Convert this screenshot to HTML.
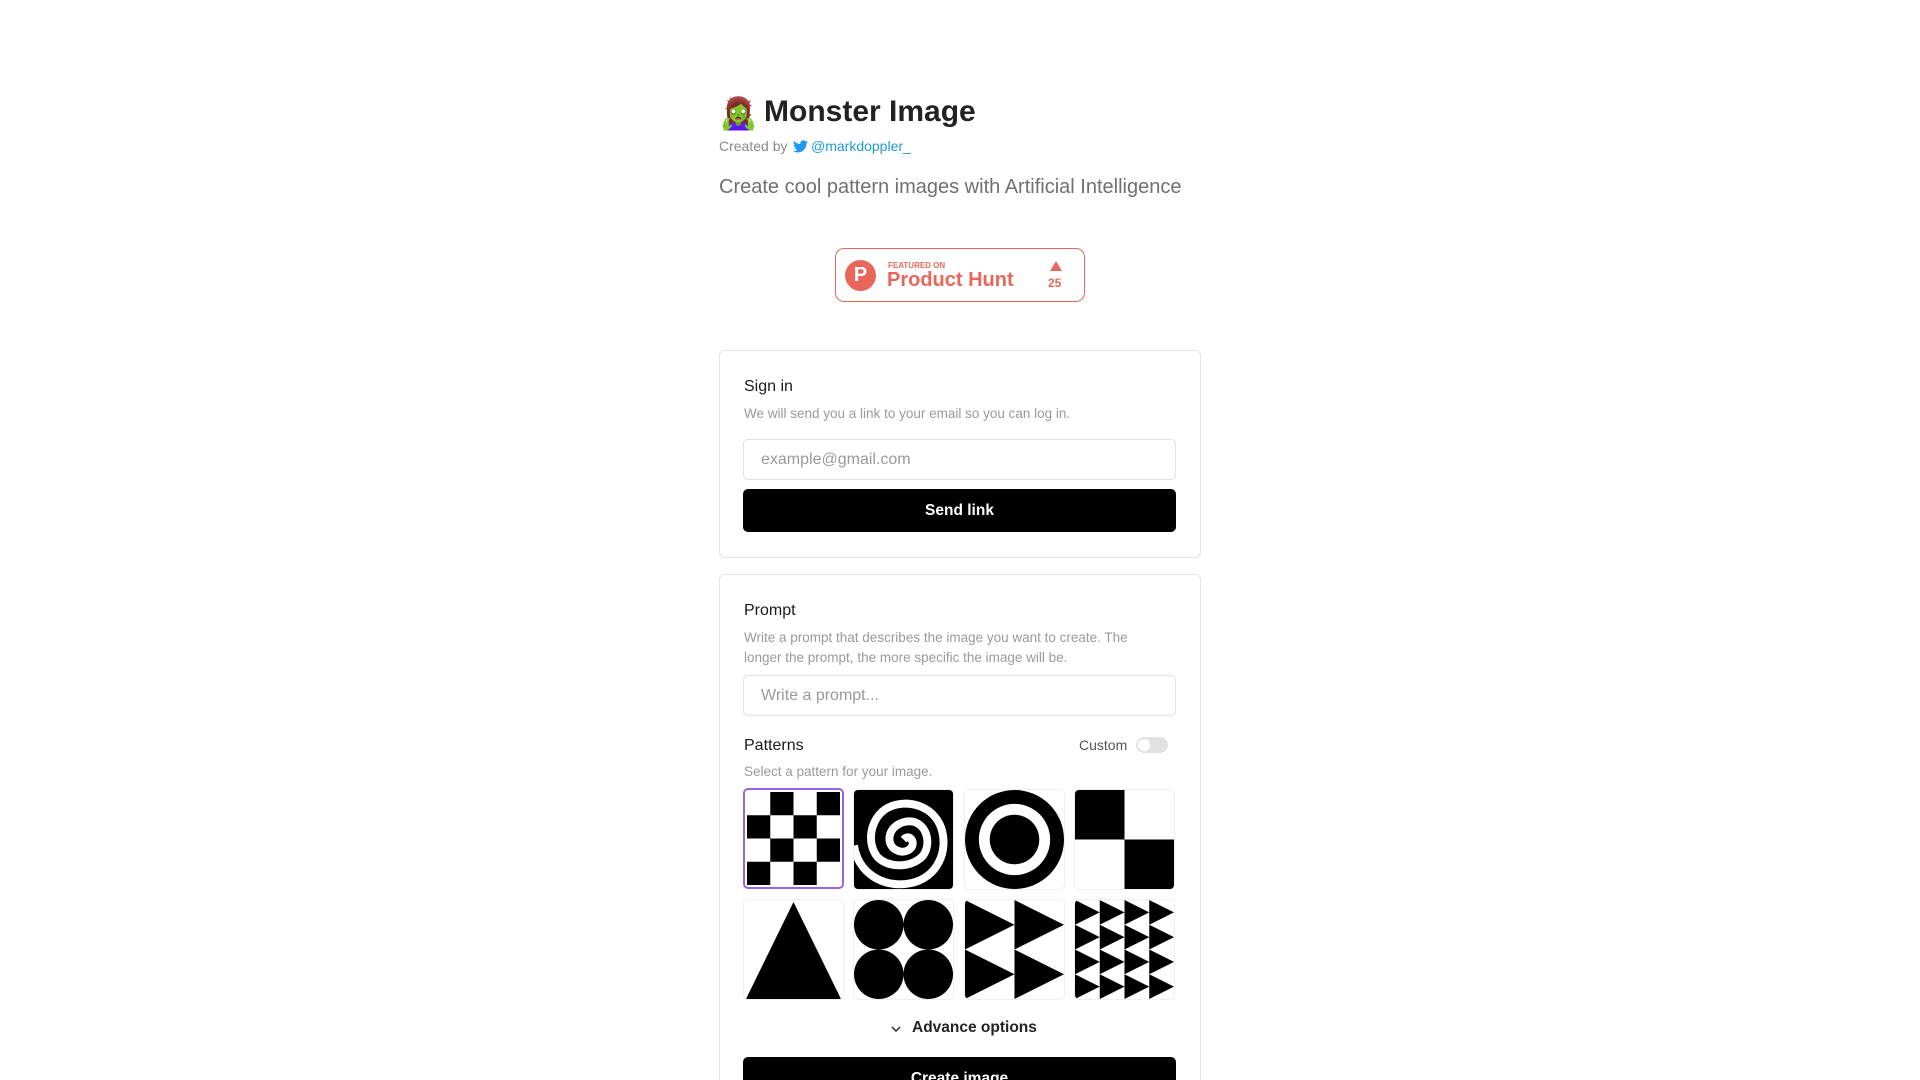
<!DOCTYPE html>
<html><head><meta charset="utf-8"><style>
*{box-sizing:border-box;margin:0;padding:0}
html{width:1920px;height:1080px;overflow:hidden}
body{width:1920px;height:1080px;overflow:hidden;background:#fff;font-family:"Liberation Sans",sans-serif;position:relative;color:#111}
.a{position:absolute;white-space:nowrap}
.card{position:absolute;left:719px;width:482px;border:1px solid #e6e6e6;border-radius:6px;background:#fff}
.inp{position:absolute;left:743px;width:433px;height:41px;border:1px solid #e2e2e2;border-radius:5px;font-size:16px;color:#9a9a9a;padding:11px 0 0 17px}
.btn{position:absolute;left:743px;width:433px;height:43px;background:#000;border-radius:5px;color:#fff;font-size:15.5px;font-weight:bold;text-align:center;line-height:43px}
.h{font-size:16px;color:#1a1a1a}
.d{font-size:13.5px;color:#9a9a9a}
.t{position:absolute;width:101px;height:101px;border:1px solid #eee;border-radius:5px;overflow:hidden}
.t svg{display:block;width:100%;height:100%}
</style></head><body>
<div class="a" style="left:719px;top:95px;font-size:31px">🧟‍♀️</div>
<div class="a" style="left:764px;top:95px;font-size:30px;font-weight:bold;color:#222">Monster Image</div>
<div class="a" style="left:719px;top:138px;font-size:14px;color:#8a8a8a">Created by</div>
<svg class="a" style="left:793px;top:140px" width="15" height="13" viewBox="0 0 24 20"><path fill="#1d9bf0" d="M24 2.4a10 10 0 0 1-2.8.8A4.9 4.9 0 0 0 23.3.5a9.8 9.8 0 0 1-3.1 1.2A4.9 4.9 0 0 0 11.8 6 14 14 0 0 1 1.7.9a4.9 4.9 0 0 0 1.5 6.6A4.9 4.9 0 0 1 1 6.9a4.9 4.9 0 0 0 3.9 4.8 4.9 4.9 0 0 1-2.2.1 4.9 4.9 0 0 0 4.6 3.4A9.9 9.9 0 0 1 0 17.3 14 14 0 0 0 7.5 19.5c9.1 0 14-7.5 14-14v-.6A10 10 0 0 0 24 2.4z"/></svg>
<div class="a" style="left:811px;top:138px;font-size:14px;color:#1f9bd1">@markdoppler_</div>
<div class="a" style="left:719px;top:176px;font-size:20px;color:#707070">Create cool pattern images with Artificial Intelligence</div>
<div class="a" style="left:835px;top:248px;width:250px;height:54px;border:1.5px solid #e8675a;border-radius:9px"></div>
<div class="a" style="left:845px;top:260px;width:31px;height:31px;border-radius:50%;background:#e8675a;color:#fff;font-weight:bold;font-size:20px;text-align:center;line-height:31px">P</div>
<div class="a" style="left:888px;top:261px;font-size:8px;font-weight:bold;color:#e8675a">FEATURED ON</div>
<div class="a" style="left:887px;top:269px;font-size:20px;font-weight:bold;color:#e8675a">Product Hunt</div>
<div class="a" style="left:1050px;top:261px;width:0;height:0;border-left:6px solid transparent;border-right:6px solid transparent;border-bottom:10px solid #e8675a"></div>
<div class="a" style="left:1048px;top:276px;font-size:12px;font-weight:bold;color:#e8675a">25</div>

<div class="card" style="top:350px;height:208px"></div>
<div class="a h" style="left:744px;top:378px">Sign in</div>
<div class="a d" style="left:744px;top:406px">We will send you a link to your email so you can log in.</div>
<div class="inp" style="top:439px">example@gmail.com</div>
<div class="btn" style="top:489px">Send link</div>

<div class="card" style="top:574px;height:520px"></div>
<div class="a h" style="left:744px;top:602px">Prompt</div>
<div class="a d" style="left:744px;top:628px;line-height:19.5px">Write a prompt that describes the image you want to create. The<br>longer the prompt, the more specific the image will be.</div>
<div class="inp" style="top:675px">Write a prompt...</div>
<div class="a h" style="left:744px;top:737px">Patterns</div>
<div class="a" style="left:1079px;top:737px;font-size:14px;color:#555">Custom</div>
<div class="a" style="left:1136px;top:737px;width:32px;height:16px;border-radius:8px;background:#e2e2e2"><div style="position:absolute;left:2px;top:2px;width:12px;height:12px;border-radius:50%;background:#fff"></div></div>
<div class="a d" style="left:744px;top:764px">Select a pattern for your image.</div>

<div class="t" style="left:743px;top:788px;border:2px solid #9b63e0;padding:2px"><svg viewBox="0 0 4 4" preserveAspectRatio="none"><rect width="4" height="4" fill="#fff"/><g fill="#000"><rect x="1" y="0" width="1" height="1"/><rect x="3" y="0" width="1" height="1"/><rect x="0" y="1" width="1" height="1"/><rect x="2" y="1" width="1" height="1"/><rect x="1" y="2" width="1" height="1"/><rect x="3" y="2" width="1" height="1"/><rect x="0" y="3" width="1" height="1"/><rect x="2" y="3" width="1" height="1"/></g></svg></div>
<div class="t" style="left:853px;top:789px"><svg viewBox="-50 -50 100 100"><rect x="-50" y="-50" width="100" height="100" fill="#000"/><path fill="none" stroke="#fff" stroke-width="8" d="M0 0 C6 -6 12 2 8 8 C2 16 -12 12 -14 2 C-16 -12 -2 -20 10 -18 C24 -14 28 4 20 16 C10 28 -14 30 -26 18 C-38 4 -34 -22 -16 -32 C4 -42 30 -34 38 -12 C46 12 34 38 8 44 C-20 50 -46 34 -50 6"/></svg></div>
<div class="t" style="left:964px;top:789px"><svg viewBox="0 0 100 100"><circle cx="50" cy="50" r="50" fill="#000"/><circle cx="50" cy="50" r="36" fill="#fff"/><circle cx="50" cy="50" r="25" fill="#000"/></svg></div>
<div class="t" style="left:1074px;top:789px"><svg viewBox="0 0 2 2"><rect width="1" height="1"/><rect x="1" y="1" width="1" height="1"/></svg></div>
<div class="t" style="left:743px;top:899px"><svg viewBox="0 0 100 100"><path d="M50 2 L98 100 L2 100Z"/></svg></div>
<div class="t" style="left:853px;top:899px"><svg viewBox="0 0 100 100"><circle cx="25" cy="25" r="25"/><circle cx="75" cy="25" r="25"/><circle cx="25" cy="75" r="25"/><circle cx="75" cy="75" r="25"/></svg></div>
<div class="t" style="left:964px;top:899px"><svg viewBox="0 0 100 100"><path d="M0 0L50 25L0 50ZM50 0L100 25L50 50ZM0 50L50 75L0 100ZM50 50L100 75L50 100Z"/></svg></div>
<div class="t" style="left:1074px;top:899px"><svg viewBox="0 0 100 100"><path d="M0 0L25 12.5L0 25ZM25 0L50 12.5L25 25ZM50 0L75 12.5L50 25ZM75 0L100 12.5L75 25Z M0 25L25 37.5L0 50ZM25 25L50 37.5L25 50ZM50 25L75 37.5L50 50ZM75 25L100 37.5L75 50Z M0 50L25 62.5L0 75ZM25 50L50 62.5L25 75ZM50 50L75 62.5L50 75ZM75 50L100 62.5L75 75Z M0 75L25 87.5L0 100ZM25 75L50 87.5L25 100ZM50 75L75 87.5L50 100ZM75 75L100 87.5L75 100Z"/></svg></div>

<svg class="a" style="left:890px;top:1024px" width="12" height="10" viewBox="0 0 12 10"><path d="M2 3l4 4 4-4" fill="none" stroke="#222" stroke-width="1.4"/></svg>
<div class="a" style="left:912px;top:1019px;font-size:15.5px;font-weight:bold;color:#222">Advance options</div>
<div class="btn" style="top:1057px">Create image</div>
</body></html>
